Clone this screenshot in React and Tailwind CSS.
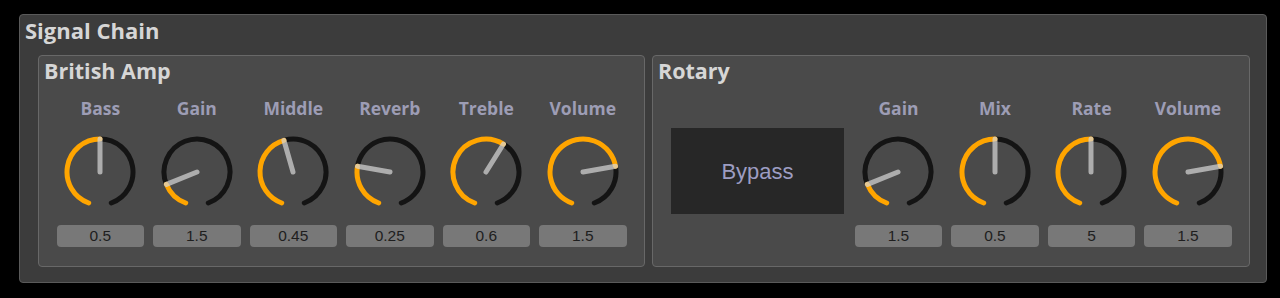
import React from 'react';

const START = -160;
const END = 160;

function pt(a, r) {
  const rad = (a * Math.PI) / 180;
  return [36 + r * Math.sin(rad), 36 - r * Math.cos(rad)];
}

function arc(a0, a1, r) {
  const [x0, y0] = pt(a0, r);
  const [x1, y1] = pt(a1, r);
  const large = a1 - a0 > 180 ? 1 : 0;
  return `M ${x0} ${y0} A ${r} ${r} 0 ${large} 1 ${x1} ${y1}`;
}

function Knob({ label, value, min = 0, max = 1 }) {
  const a = START + ((value - min) / (max - min)) * (END - START);
  const r = 33;
  const [px, py] = pt(a, 33);
  return (
    <div className="flex flex-col items-center w-[87.5px]">
      <div className="h-[22px] mt-[8px] leading-[22px] text-[17.5px] font-bold text-[#9d9db5] whitespace-nowrap">{label}</div>
      <svg width="72" height="72" viewBox="0 0 72 72" className="mt-[17px]">
        <path d={arc(a, END, r)} stroke="#141414" strokeWidth="5" fill="none" strokeLinecap="round" />
        <path d={arc(START, a, r)} stroke="#ffa500" strokeWidth="5" fill="none" strokeLinecap="round" />
        <line x1="36" y1="36" x2={px} y2={py} stroke="rgba(215,215,215,0.7)" strokeWidth="5" strokeLinecap="round" />
      </svg>
      <div className="mt-[17px] w-full h-[22px] rounded-[4px] bg-[#787878] text-[#1e1e1e] text-[15.5px] leading-[22px] text-center" style={{ fontFamily: '"Liberation Sans", Arial, sans-serif' }}>
        {value}
      </div>
    </div>
  );
}

function Panel({ title, width, children }) {
  return (
    <div className="h-[212px] bg-[#4a4a4a] border border-[#686868] rounded-[4px]" style={{ width }}>
      <div className="h-[33px] px-[5px] text-[21.5px] leading-[30px] font-bold text-[#d6d6d6] whitespace-nowrap">{title}</div>
      {children}
    </div>
  );
}

export default function App() {
  const amp = [
    { label: 'Bass', value: 0.5, max: 1 },
    { label: 'Gain', value: 1.5, max: 10 },
    { label: 'Middle', value: 0.45, max: 1 },
    { label: 'Reverb', value: 0.25, max: 1 },
    { label: 'Treble', value: 0.6, max: 1 },
    { label: 'Volume', value: 1.5, max: 2 },
  ];
  const rotary = [
    { label: 'Gain', value: 1.5, max: 10 },
    { label: 'Mix', value: 0.5, max: 1 },
    { label: 'Rate', value: 5, max: 10 },
    { label: 'Volume', value: 1.5, max: 2 },
  ];

  return (
    <div className="w-full h-[298px] bg-black pt-[14px] pl-[19px]" style={{ fontFamily: '"Open Sans", "Noto Sans", sans-serif' }}>
      <div className="w-[1248px] h-[269px] bg-[#3c3c3c] border border-[#5a5a5a] rounded-[4px]">
        <div className="h-[40px] px-[5px] text-[22px] leading-[30px] font-bold text-[#d6d6d6]">Signal Chain</div>
        <div className="flex gap-[7px] pl-[18px]">
          <Panel title="British Amp" width="607px">
            <div className="flex gap-[9px] pl-[17.5px]">
              {amp.map((k) => (
                <Knob key={k.label} label={k.label} value={k.value} max={k.max} />
              ))}
            </div>
          </Panel>
          <Panel title="Rotary" width="598px">
            <div className="flex items-start gap-[9px] pl-[18px]">
              <div
                className="mt-[39px] mr-[1.7px] w-[173px] h-[86px] bg-[#272727] flex items-center justify-center text-[22px] text-[#9d9dc2]"
                style={{ fontFamily: '"Liberation Sans", Arial, sans-serif' }}
              >
                Bypass
              </div>
              {rotary.map((k) => (
                <Knob key={k.label} label={k.label} value={k.value} max={k.max} />
              ))}
            </div>
          </Panel>
        </div>
      </div>
    </div>
  );
}
